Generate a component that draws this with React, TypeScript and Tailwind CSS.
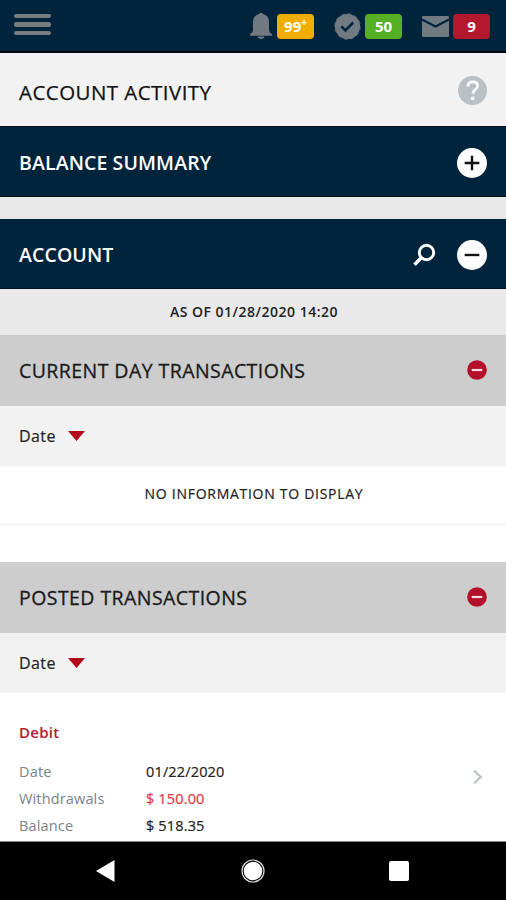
import type { ReactNode } from "react";

type SectionHeaderProps = {
  title: string;
  children?: ReactNode;
};

type DetailRowProps = {
  label: string;
  value: string;
  valueClassName?: string;
};

function BellIcon() {
  return (
    <svg width="22" height="26" viewBox="0 0 22 26" fill="#717a80">
      <path d="M11 0c1.300 0 2 .5 2.200 1.300C17.300 2.200 19 5.300 19 9.300v6.900c0 2.300 1 3.800 3 4.800v1.700H0V21c2-1 3-2.500 3-4.800V9.300c0-4 1.700-7.100 5.800-8C9 .5 9.700 0 11 0z" />
      <path d="M7.500 23.500h7c-.4 1.600-1.700 2.500-3.500 2.500s-3.100-.9-3.500-2.500z" />
    </svg>
  );
}

function ApprovalIcon() {
  return (
    <svg width="27" height="27" viewBox="0 0 27 27">
      <circle cx="13.500" cy="13.500" r="12.600" fill="#717a80" />
      <circle
        cx="13.500"
        cy="13.500"
        r="12.800"
        fill="none"
        stroke="#717a80"
        strokeWidth="0.800"
        strokeDasharray="3.500 3.200"
      />
      <path d="M7.300 13.300l4.200 4.200 7.700-8" fill="none" stroke="#00243c" strokeWidth="2.600" />
    </svg>
  );
}

function MailIcon() {
  return (
    <svg width="27" height="21" viewBox="0 0 27 21">
      <rect width="27" height="21" rx="1" fill="#717a80" />
      <path d="M0 3.500l13.500 7L27 3.500" fill="none" stroke="#00243c" strokeWidth="2" />
    </svg>
  );
}

function SearchIcon() {
  return (
    <svg width="24" height="24" viewBox="0 0 24 24" fill="none" stroke="#fff">
      <circle cx="14.500" cy="9.500" r="7.200" strokeWidth="2.900" />
      <path d="M9.700 14.300L2.500 21.700" strokeWidth="3.400" />
    </svg>
  );
}

function ToggleIcon({ expanded }: { expanded: boolean }) {
  return (
    <svg width="30" height="30" viewBox="0 0 30 30">
      <circle cx="15" cy="15" r="15" fill="#fff" />
      <path
        d={expanded ? "M7.700 15h14.600" : "M7.700 15h14.600M15 7.700v14.600"}
        stroke="#111"
        strokeWidth="2.400"
      />
    </svg>
  );
}

function CollapseIcon() {
  return (
    <svg width="20" height="20" viewBox="0 0 20 20" className="mb-px">
      <circle cx="10" cy="10" r="9.800" fill="#b3102a" />
      <path d="M4.700 10h10.600" stroke="#f3dde0" strokeWidth="2.200" />
    </svg>
  );
}

function SectionHeader({ title, children }: SectionHeaderProps) {
  return (
    <div className="flex h-[70px] items-center justify-between border-b border-[#000d1c] bg-[#00243c] px-[19px] pt-[3px]">
      <h2 className="text-[19.5px] font-semibold tracking-[0.1px] text-white">{title}</h2>
      <div className="flex items-center gap-[21px]">{children}</div>
    </div>
  );
}

function TransactionsHeader({ title }: { title: string }) {
  return (
    <>
      <div className="flex h-[71px] items-center justify-between bg-[#cdcdcd] px-[19px]">
        <h3 className="text-[19.5px] tracking-[0.43px] text-[#1a1a1a] [-webkit-text-stroke:0.3px]">
          {title}
        </h3>
        <CollapseIcon />
      </div>
      <div className="flex h-[60px] items-center gap-3 bg-[#f2f2f2] px-[19px]">
        <span className="text-base tracking-[0.4px] text-[#222] [-webkit-text-stroke:0.2px]">
          Date
        </span>
        <svg width="17" height="10" viewBox="0 0 17 10">
          <path d="M0 0h17L8.500 10z" fill="#b3081b" />
        </svg>
      </div>
    </>
  );
}

function DetailRow({ label, value, valueClassName = "text-[#222]" }: DetailRowProps) {
  return (
    <div className="flex h-[26.7px] items-center text-[14.5px] tracking-[0.15px]">
      <dt className="w-[127px] text-[#7b8387]">{label}</dt>
      <dd className={`[-webkit-text-stroke:0.2px] ${valueClassName}`}>{value}</dd>
    </div>
  );
}

export default function App() {
  return (
    <div className="flex h-[900px] w-[506px] flex-col overflow-hidden bg-white font-['Open_Sans',sans-serif]">
      <header className="flex h-[53px] shrink-0 items-center border-b-2 border-[#000711] bg-[#00243c] pr-4 pl-[14px]">
        <div className="mb-[2px] flex w-[37px] flex-col gap-[4px]">
          <span className="h-[4.5px] rounded-[2px] bg-[#777d80]" />
          <span className="h-[4.5px] rounded-[2px] bg-[#777d80]" />
          <span className="h-[4.5px] rounded-[2px] bg-[#777d80]" />
        </div>
        <div className="ml-auto flex items-center gap-5 pt-px text-[15px] font-bold text-white">
          <div className="flex items-center gap-[5px]">
            <BellIcon />
            <span className="flex h-[25px] w-[37px] items-center justify-center rounded-[4px] bg-[#f2ae00]">
              99<sup className="-top-1 text-[10px]">+</sup>
            </span>
          </div>
          <div className="flex items-center gap-1">
            <ApprovalIcon />
            <span className="flex h-[25px] w-[37px] items-center justify-center rounded-[4px] bg-[#55b023]">
              50
            </span>
          </div>
          <div className="flex items-center gap-1">
            <MailIcon />
            <span className="flex h-[25px] w-[37px] items-center justify-center rounded-[4px] bg-[#b3182f]">
              9
            </span>
          </div>
        </div>
      </header>

      <div className="flex h-[74px] shrink-0 items-center justify-between border-b border-[#000d1c] bg-[#f2f2f2] px-[19px]">
        <h1 className="mt-[5px] text-[20.5px] tracking-[0.45px] text-[#111] [-webkit-text-stroke:0.25px]">
          ACCOUNT ACTIVITY
        </h1>
        <svg width="29" height="29" viewBox="0 0 29 29" className="mt-px">
          <circle cx="14.500" cy="14.500" r="14.500" fill="#b9c1c5" />
          <path
            d="M9.700 10.500c.3-3 2.300-4.600 5-4.600 2.900 0 4.900 1.600 4.900 4.100 0 3.400-4.800 3.800-4.800 7.800"
            fill="none"
            stroke="#fff"
            strokeWidth="2.700"
          />
          <circle cx="14.700" cy="22.300" r="1.900" fill="#fff" />
        </svg>
      </div>

      <main className="min-h-0 flex-1 overflow-hidden">
        <SectionHeader title="BALANCE SUMMARY">
          <ToggleIcon expanded={false} />
        </SectionHeader>
        <div className="h-[22px] bg-[#e9e9e9]" />
        <SectionHeader title="ACCOUNT">
          <SearchIcon />
          <ToggleIcon expanded />
        </SectionHeader>
        <p className="flex h-[46px] items-center justify-center bg-[#e9e9e9] pb-[2px] pl-[2px] text-[14px] font-semibold tracking-[0.5px] text-[#222]">
          AS OF 01/28/2020 14:20
        </p>

        <TransactionsHeader title="CURRENT DAY TRANSACTIONS" />
        <p className="flex h-[60px] items-center justify-center border-b-[3px] border-[#f7f7f7] pb-[2px] pl-[2px] text-[14px] tracking-[0.72px] text-[#222] [-webkit-text-stroke:0.2px]">
          NO INFORMATION TO DISPLAY
        </p>
        <div className="h-9" />

        <TransactionsHeader title="POSTED TRANSACTIONS" />
        <div className="flex items-center justify-between pr-[22px] pl-[19px]">
          <div>
            <h4 className="pt-[29px] text-[15px] leading-[21px] font-semibold tracking-[0.25px] text-[#b3182f]">
              Debit
            </h4>
            <dl className="pt-4">
              <DetailRow label="Date" value="01/22/2020" />
              <DetailRow label="Withdrawals" value="$ 150.00" valueClassName="text-[#e2383c]" />
              <DetailRow label="Balance" value="$ 518.35" />
            </dl>
          </div>
          <svg width="12" height="16" viewBox="0 0 12 16" className="mt-[21px]">
            <path d="M2 1.500L8.700 8 2 14.500" fill="none" stroke="#bcc4c8" strokeWidth="2.400" />
          </svg>
        </div>
      </main>

      <nav className="grid h-[59px] shrink-0 grid-cols-[1fr_24px_1fr] items-center border-t border-[#888] bg-black pr-[97px] pl-[96px]">
        <svg width="19" height="22" viewBox="0 0 19 22">
          <path d="M18.500 0v22L0 11z" fill="#fff" />
        </svg>
        <svg width="24" height="24" viewBox="0 0 24 24">
          <circle cx="12" cy="12" r="11" fill="none" stroke="#ddd" strokeWidth="1.200" />
          <circle cx="12" cy="12" r="9.300" fill="#fff" />
        </svg>
        <span className="size-5 justify-self-end rounded-[2px] bg-white" />
      </nav>
    </div>
  );
}
